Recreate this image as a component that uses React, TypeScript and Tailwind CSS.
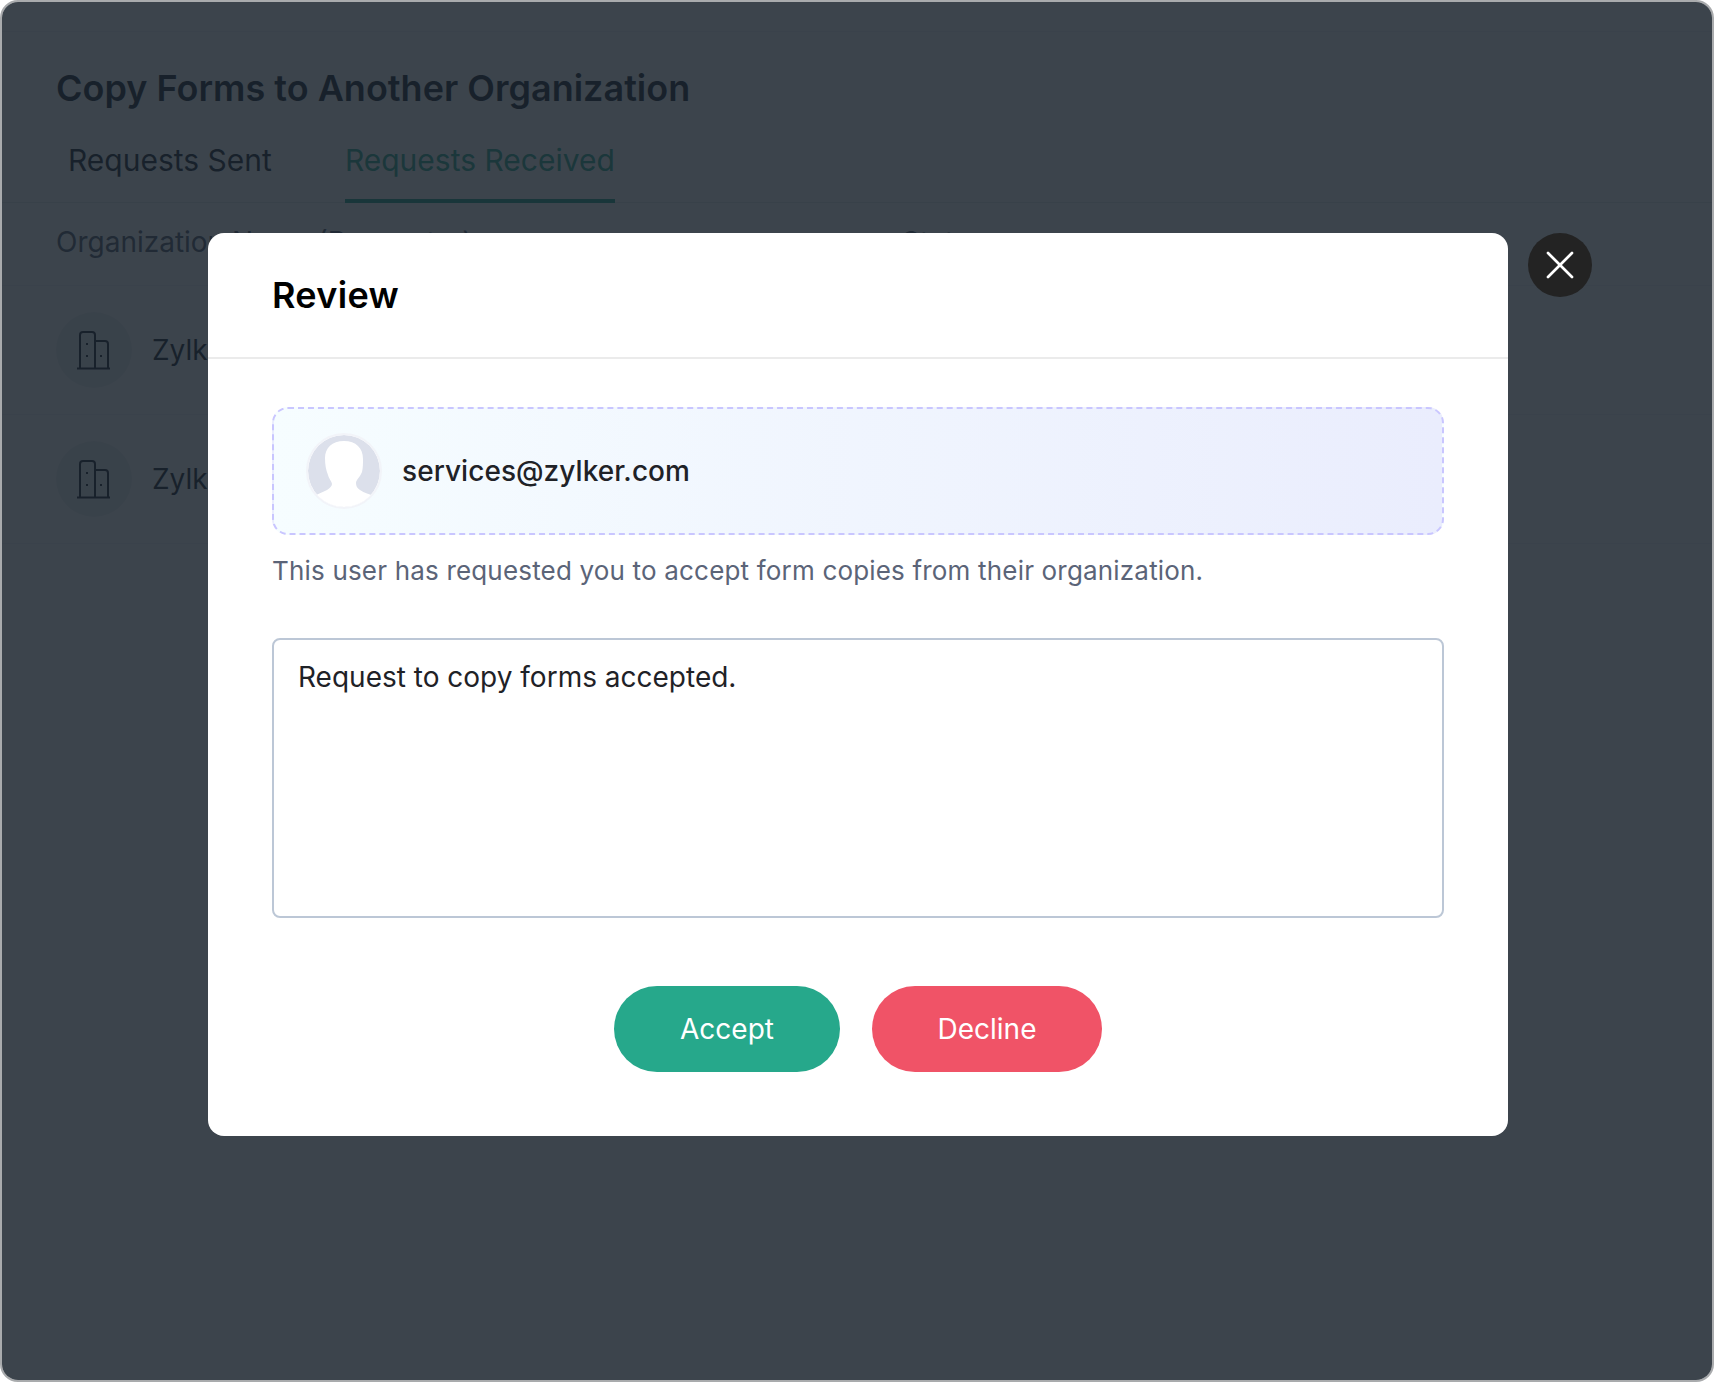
import { X } from "lucide-react";

const orgs = ["Zylker Corporation", "Zylker Technologies"];

function BuildingIcon() {
    return (
        <svg width="76" height="76" viewBox="0 0 76 76" fill="none" stroke="#111827" strokeWidth="2">
            <path d="M24 56V23a3 3 0 0 1 3-3h9a3 3 0 0 1 3 3v33" />
            <path d="M39 29h10a3 3 0 0 1 3 3v24" />
            <path d="M21 56.500h33" />
            <path d="M31 31v2M31 43v2M45 43v2" />
        </svg>
    );
}

function Avatar() {
    return (
        <div className="w-[76px] h-[76px] shrink-0 rounded-full border-2 border-[#f2f4f9] bg-white overflow-hidden">
            <svg width="72" height="72" viewBox="0 0 72 72">
                <circle cx="36" cy="36" r="36" fill="#dce0eb" />
                <path
                    d="M36 6c-12 0-19 7-19 17 0 7 1 12 3 17 1 4 4 7 4 9 0 2-2 4-5 6-4 2-9 4-13 6 7 7 19 11 30 11s23-4 30-11c-4-2-10-3-14-6-3-2-4-4-4-7 0-3 4-6 6-11 1-4 1-9 1-13C55 13 48 6 36 6z"
                    fill="#ffffff"
                />
            </svg>
        </div>
    );
}

export default function App() {
    return (
        <div className="relative w-[1714px] h-[1382px] bg-white overflow-hidden font-['Inter',sans-serif]">
            <div className="relative w-full h-full border-2 border-[#a9abad] rounded-[18px] overflow-hidden bg-white">
                <div className="h-[30px] border-b border-[#eef0f3]" />
                <h1 className="pl-[54px] pt-[31px] text-[36px] leading-[50px] font-semibold text-[#111827]">
                    Copy Forms to Another Organization
                </h1>
                <div className="flex gap-[73px] pl-[66px] pt-[25px] border-b border-[#e5e7eb] h-[64px] box-content">
                    <span className="text-[30px] leading-[44px] text-[#111827]">Requests Sent</span>
                    <span className="text-[30px] leading-[44px] text-[#22a68a] h-[65px] border-b-4 border-[#1a9e84]">
                        Requests Received
                    </span>
                </div>
                <div className="flex pl-[54px] pb-[5px] h-[83px] items-center border-b border-[#eef0f3] text-[28px] text-[#4b5563]">
                    <span className="w-[846px]">Organization Name (Requester)</span>
                    <span>Status</span>
                </div>
                {orgs.map(org => (
                    <div key={org} className="flex items-center h-[129px] pl-[54px] gap-[20px] border-b border-[#eef0f3]">
                        <div className="w-[76px] h-[76px] rounded-full bg-[#eceef1]">
                            <BuildingIcon />
                        </div>
                        <span className="text-[28px] text-[#111827]">{org}</span>
                    </div>
                ))}

                <div className="absolute inset-0 bg-[#1a232d]/85 flex items-start pl-[206px] pt-[231px] gap-[20px]">
                    <div className="w-[1300px] h-[903px] bg-white rounded-[16px] flex flex-col">
                        <div className="h-[126px] border-b-2 border-[#ebebeb] pl-[64px] pt-[40px] shrink-0">
                            <h2 className="text-[36px] leading-[44px] font-semibold tracking-[0.3px] text-black">Review</h2>
                        </div>
                        <div className="px-[64px] pt-[48px] flex flex-col">
                            <div className="flex items-center gap-[20px] h-[128px] pl-[32px] rounded-[16px] border-2 border-dashed border-[#c9c6ff] bg-gradient-to-r from-[#f6fdff] to-[#eaedfd]">
                                <Avatar />
                                <span className="text-[28px] font-medium tracking-[0.05px] text-[#1f2227]">services@zylker.com</span>
                            </div>
                            <p className="mt-[18px] text-[26px] leading-[36px] tracking-[0.18px] text-[#5b6478]">
                                This user has requested you to accept form copies from their organization.
                            </p>
                            <div className="mt-[49px] h-[280px] rounded-[8px] border-2 border-[#bcc7d6] px-[24px] pt-[19px] text-[28px] leading-[36px] text-[#1f2227]">
                                Request to copy forms accepted.
                            </div>
                            <div className="flex justify-center gap-[32px] mt-[68px]">
                                <button className="w-[226px] h-[86px] rounded-full bg-[#26a88b] text-white text-[28px]">Accept</button>
                                <button className="w-[230px] h-[86px] rounded-full bg-[#f05367] text-white text-[28px]">Decline</button>
                            </div>
                        </div>
                    </div>
                    <button className="w-[64px] h-[64px] rounded-full bg-[#232323] flex items-center justify-center text-white">
                        <X size={48} strokeWidth={1.35} />
                    </button>
                </div>
            </div>
        </div>
    );
}
